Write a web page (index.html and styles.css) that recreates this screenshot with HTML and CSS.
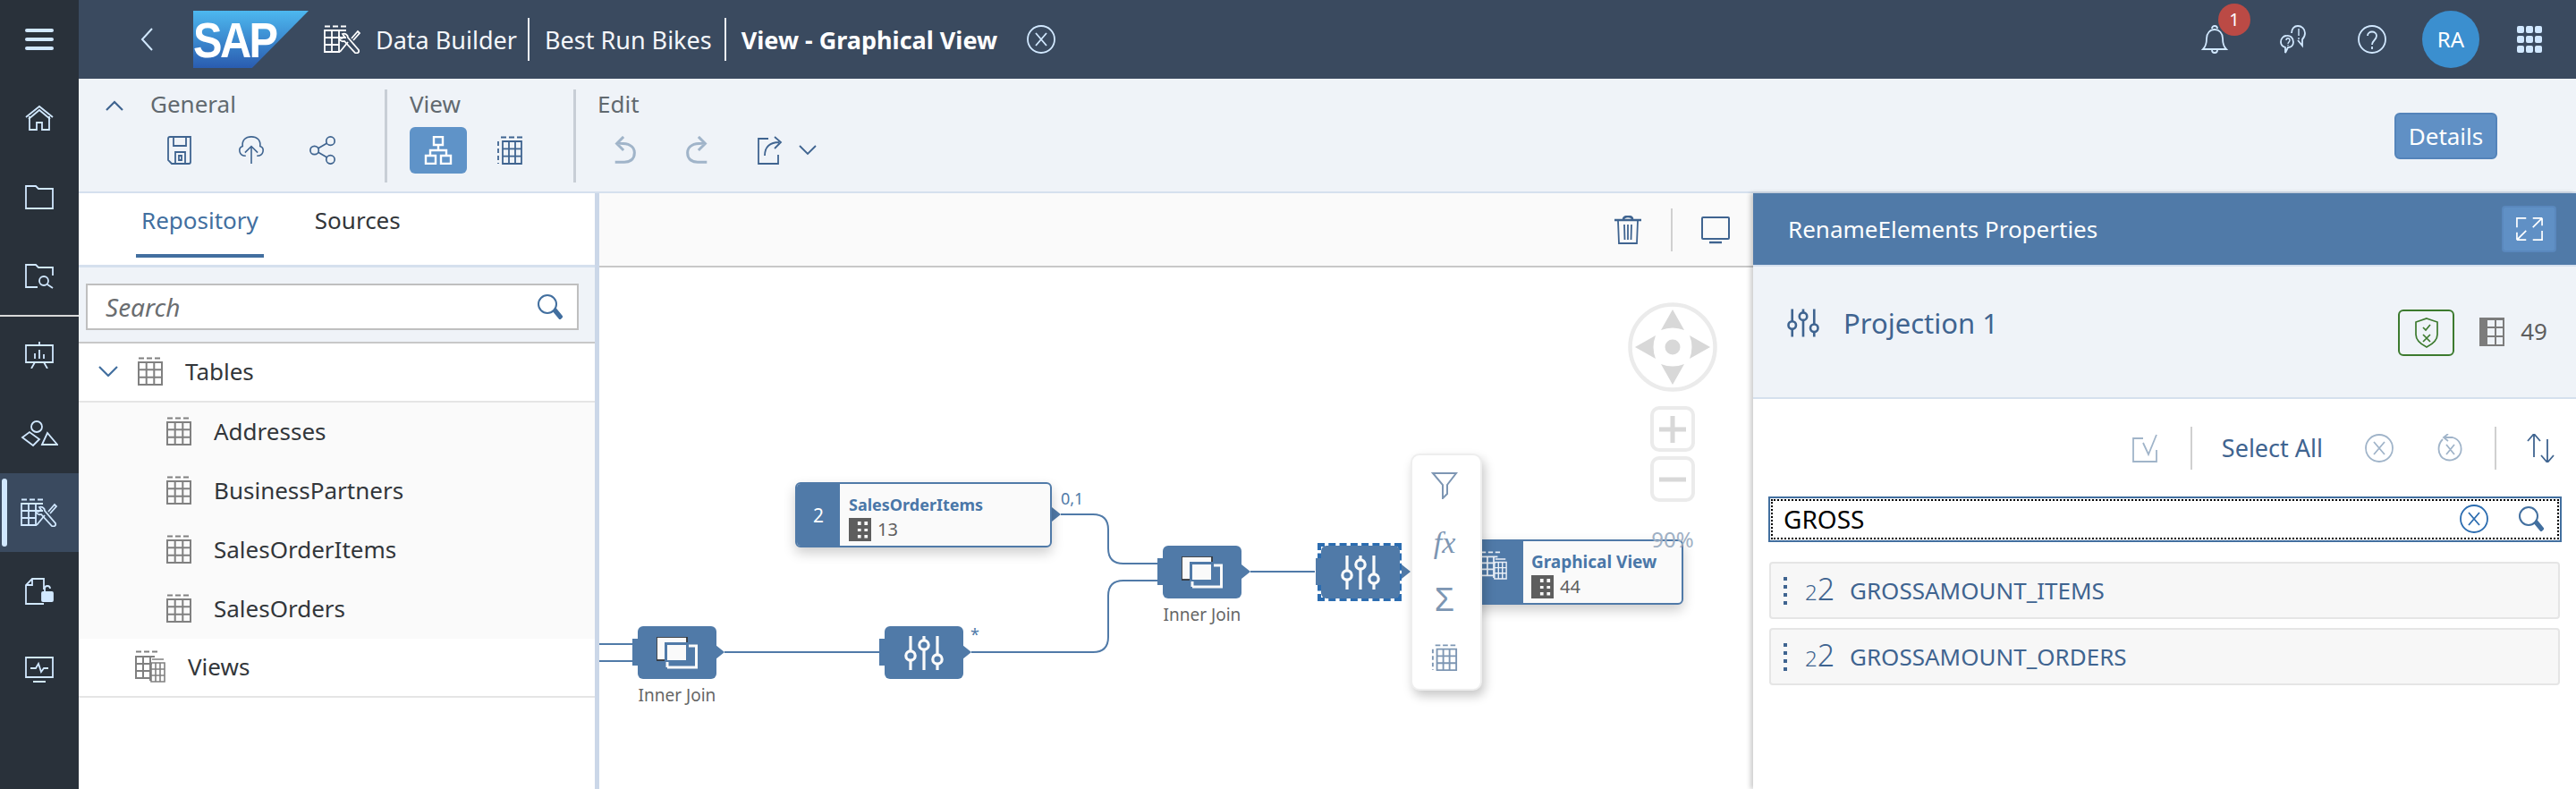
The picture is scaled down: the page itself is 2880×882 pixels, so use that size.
FILE: index.html
```html
<!DOCTYPE html>
<html lang="en">
<head>
  <meta charset="UTF-8">
  <title>Data Builder - Graphical View</title>
  <link rel="stylesheet" href="styles.css">
</head>
<body>
<svg class="defs" width="0" height="0">
  <symbol id="i-table" viewBox="0 0 28 32"><g fill="none" stroke="currentColor" stroke-width="2"><path d="M1 1.5h26" stroke-dasharray="6 3"/><path d="M1 6h26v25H1zM9.7 6v25M18.3 6v25M1 14.3h26M1 22.7h26"/></g></symbol>
  <symbol id="i-tables" viewBox="0 0 34 36"><g fill="none" stroke="currentColor" stroke-width="2"><path d="M1 1.5h24" stroke-dasharray="6 3"/><path d="M22 7H1v24h16M1 15h18M1 23h16M9 7v24M17 7v27"/><path d="M18 14h15v21H18zM23 14v21M28 14v21M18 21h15M18 28h15M19 10h13" stroke-width="1.6"/></g></symbol>
  <symbol id="i-tablefill" viewBox="0 0 25 26"><rect width="25" height="26" rx="2" fill="#5e5e5e"/><path d="M9 3h5.5v6H9zM16.500 3H22v6h-5.500zM9 11h5.500v5H9zM16.500 11H22v5h-5.500zM9 18h5.500v5.500H9zM16.500 18H22v5.500h-5.500z" fill="#fafafa"/></symbol>
  <symbol id="i-sliders" viewBox="0 0 44 38"><g fill="none" stroke="currentColor" stroke-width="3.200"><path d="M7 0v17M7 27v11M22 0v6M22 16v22M37 0v21M37 31v7"/><circle cx="7" cy="22" r="5.200"/><circle cx="22" cy="10" r="5.200"/><circle cx="37" cy="26" r="5.200"/></g></symbol>
  <symbol id="i-join" viewBox="0 0 46 36"><rect width="34" height="26" fill="#fafafa"/><path d="M12 34H44.500V10H35" fill="none" stroke="#fafafa" stroke-width="3"/><rect x="10.500" y="7.500" width="24" height="20" fill="#fafafa" stroke="#507aa8" stroke-width="3"/><path d="M12 28v6" stroke="#fafafa" stroke-width="3"/></symbol>
  <symbol id="i-xcircle" viewBox="0 0 32 32"><g fill="none" stroke="currentColor" stroke-width="1.800"><circle cx="16" cy="16" r="15"/><path d="M10 9l12 14M22 9L10 23"/></g></symbol>
  <symbol id="i-search" viewBox="0 0 28 28"><g fill="none" stroke="currentColor" stroke-width="2"><circle cx="11" cy="11" r="10"/></g><path d="M17.500 18.500l3-2 7 8.500-2.500 2.500z" fill="currentColor"/></symbol>
  <symbol id="i-builder" viewBox="0 0 42 32"><g fill="none" stroke="currentColor" stroke-width="1.800"><path d="M1 1.500h26" stroke-dasharray="6 3"/><path d="M25 6H1v24h17M1 14h24M1 22h16M9 6v24M17 6v24"/><path d="M21 10c3-1 6 1 6 4l12 14c1 3-2 4-4 3L23 18c-3 1-6-1-6-5l3 2 3-2z"/><path d="M18 30l9-11M31 15l7-8 2 2-7 8"/></g></symbol>
</svg>

<div class="app">
  <nav class="rail">
    <div class="rail-item">
      <div class="burger"><i></i><i></i><i></i></div>
    </div>
    <div class="rail-item"><svg class="rail-icon" viewBox="0 0 32 28"><path d="M1 13L16 1l15 12M5 12v15h8v-8h6v8h8V12" /><path d="M4 15L16 5l12 10"/></svg></div>
    <div class="rail-item"><svg class="rail-icon" viewBox="0 0 32 28"><path d="M1 2h11l3 3h16v22H1z"/></svg></div>
    <div class="rail-item"><svg class="rail-icon" viewBox="0 0 32 28"><path d="M14 27H1V2h11l3 3h16v9M31 5v5"/><circle cx="21" cy="20" r="5"/><path d="M25 24l6 4"/></svg></div>
    <div class="rail-line"></div>
    <div class="rail-item"><svg class="rail-icon" viewBox="0 0 32 30"><path d="M1 4h30v19H1zM16 0v4M11 23l-4 7M21 23l4 7M11 19v-6M16 19V9M21 19v-5"/></svg></div>
    <div class="rail-item"><svg class="rail-icon wide" viewBox="0 0 42 30"><circle cx="18" cy="7" r="6"/><path d="M2 19L10 13l11 8-7 7zM24 27l6-13 11 13z"/></svg></div>
    <div class="rail-item active"><svg class="rail-icon wide"><use href="#i-builder"/></svg></div>
    <div class="rail-item"><svg class="rail-icon" viewBox="0 0 32 30"><path d="M21 13V1H8L1 8v21h20M8 1v7H1" /><rect x="19" y="16" width="12" height="10" rx="1" fill="currentColor"/><path d="M22 16v-4c0-4 6-4 6 0"/></svg></div>
    <div class="rail-item"><svg class="rail-icon" viewBox="0 0 32 30"><path d="M1 1h30v22H1zM9 28h14M6 13h6l3-5 3 9 3-4h5"/></svg></div>
  </nav>

  <div class="main">
    <header class="shell">
      <svg class="back" viewBox="0 0 16 28"><path d="M14 2L3 14l11 12"/></svg>
      <div class="logo"><span>SAP</span></div>
      <svg class="shell-app"><use href="#i-builder"/></svg>
      <span class="crumb first">Data Builder</span>
      <span class="crumb">Best Run Bikes</span>
      <span class="crumb bold">View - Graphical View</span>
      <svg class="shell-close"><use href="#i-xcircle"/></svg>
      <div class="shell-right">
        <div class="bell">
          <svg class="shell-icon" viewBox="0 0 32 32"><path d="M3 27c3-3 4-6 4-12 0-6 4-10 9-10s9 4 9 10c0 6 1 9 4 12zM13 4c0-4 6-4 6 0M13 28c0 4 6 4 6 0"/></svg>
          <span class="badge">1</span>
        </div>
        <svg class="shell-icon" viewBox="0 0 32 32"><path d="M8 12c4-1 8 2 8 7 0 4-3 6-6 6l-3 6v-6c-3-1-5-3-5-6 0-4 3-7 6-7zM14 9c0-5 3-8 7-8s8 3 8 8c0 3-1 5-3 7v7l-5-6"/><path d="M22 4v8M22 14v2M8 17c0-3 4-3 4 0 0 2-2 2-2 4M10 22v1" stroke-width="1.400"/></svg>
        <svg class="shell-icon" viewBox="0 0 32 32"><circle cx="16" cy="16" r="15"/><path d="M11 12c0-6 10-6 10 0 0 5-5 5-5 10M16 24v3"/></svg>
        <div class="avatar">RA</div>
        <div class="dots"><i></i><i></i><i></i><i></i><i></i><i></i><i></i><i></i><i></i></div>
      </div>
    </header>

    <section class="ribbon">
      <svg class="ribbon-toggle" viewBox="0 0 22 12"><path d="M2 11l9-9 9 9"/></svg>
      <div class="group general">
        <span class="group-title">General</span>
        <div class="group-icons">
          <svg class="tool" viewBox="0 0 28 32"><path d="M1 3q0-2 2-2h23v28q0 2-2 2H5l-4-4zM7 1v10h14V1M9 18h11v13H9zM13 22h3v5h-3z"/></svg>
          <svg class="tool" viewBox="0 0 32 36"><path d="M16 35V13M8 21l8-8 8 8M9 25c-9 0-10-10-4-12C4 5 9 1 16 1s12 4 11 12c6 2 5 12-4 12"/></svg>
          <svg class="tool" viewBox="0 0 32 34"><circle cx="6" cy="17" r="5"/><circle cx="25" cy="6" r="5"/><circle cx="25" cy="28" r="5"/><path d="M10.500 14.500L21 8.500M10.500 19.500L21 25.500"/></svg>
        </div>
      </div>
      <div class="group view">
        <span class="group-title">View</span>
        <div class="group-icons">
          <div class="tool-on"><svg class="tool white" viewBox="0 0 32 32"><path d="M11 1h10v9H11zM2 22h11v9H2zM19 22h11v9H19zM16 10v6M7 22v-6h18v6"/></svg></div>
          <svg class="tool" viewBox="0 0 28 32"><path d="M4 1.500h24" stroke-dasharray="6 3"/><path d="M6 6h21v25H6zM13 6v25M20 6v25M6 14.300h21M6 22.600h21"/><path d="M1 6v25" stroke-dasharray="5 3"/></svg>
        </div>
      </div>
      <div class="group edit">
        <span class="group-title">Edit</span>
        <div class="group-icons">
          <svg class="tool dim thick" viewBox="0 0 28 34"><path d="M12 1L4 9l8 8M4 9c14-1 21 3 21 11 0 9-7 11-12 11H2"/></svg>
          <svg class="tool dim thick" viewBox="0 0 28 34"><path d="M16 1l8 8-8 8M24 9C10 8 3 12 3 20c0 9 7 11 12 11h11"/></svg>
          <svg class="tool share" viewBox="0 0 32 32"><path d="M12 3H1v28h22V21M8 22c0-10 6-15 16-15M19 1l7 6-7 7"/></svg>
          <svg class="caret" viewBox="0 0 20 12"><path d="M1 1l9 9 9-9"/></svg>
        </div>
      </div>
      <button class="details">Details</button>
    </section>

    <div class="work">
      <aside class="repo">
        <div class="tabs">
          <span class="tab on">Repository</span>
          <span class="tab">Sources</span>
        </div>
        <div class="repo-search">
          <div class="searchbox">
            <span>Search</span>
            <svg class="search-mark"><use href="#i-search"/></svg>
          </div>
        </div>
        <div class="tree-row top">
          <svg class="expander" viewBox="0 0 22 12"><path d="M1 1l10 10 10-10"/></svg>
          <svg class="tree-icon"><use href="#i-table"/></svg>
          <span>Tables</span>
        </div>
        <div class="tree-kids">
          <div class="tree-row"><svg class="tree-icon"><use href="#i-table"/></svg><span>Addresses</span></div>
          <div class="tree-row"><svg class="tree-icon"><use href="#i-table"/></svg><span>BusinessPartners</span></div>
          <div class="tree-row"><svg class="tree-icon"><use href="#i-table"/></svg><span>SalesOrderItems</span></div>
          <div class="tree-row"><svg class="tree-icon"><use href="#i-table"/></svg><span>SalesOrders</span></div>
        </div>
        <div class="tree-row top views">
          <svg class="tree-icon big"><use href="#i-tables"/></svg>
          <span>Views</span>
        </div>
      </aside>

      <section class="canvas">
        <div class="canvas-bar">
          <svg class="bar-icon" viewBox="0 0 30 32"><path d="M0 5h30M10 4c0-4 10-4 10 0" stroke-width="2.600"/><path d="M4 6l1 25h20l1-25M11 10l.5 17M15 10v17M19 10l-.5 17"/></svg>
          <i class="bar-sep"></i>
          <svg class="bar-icon" viewBox="0 0 32 30"><path d="M2 1h28q1 0 1 1v22q0 1-1 1H2q-1 0-1-1V2q0-1 1-1z" stroke-width="2"/><path d="M9 29h14" stroke-width="2.400"/></svg>
        </div>
        <div class="stage">
          <svg class="wires" viewBox="0 0 1285 583">
            <path d="M0 421H37M0 440H37M140 430H314M416 430H552q17 0 17-17V367q0-17 17-17H625M516 276H552q17 0 17 17V314q0 17 17 17H625M728 340H800"/>
            <path class="tip" d="M130 422l10 8-10 8zM406 422l10 8-10 8zM506 268l10 8-10 8zM718 332l10 8-10 8zM897 332l10 8-10 8z"/>
          </svg>

          <div class="node card sales">
            <div class="card-side">2</div>
            <div class="card-body">
              <b>SalesOrderItems</b>
              <div class="card-count"><svg class="count-icon"><use href="#i-tablefill"/></svg>13</div>
            </div>
          </div>
          <span class="node cardinal one">0,1</span>
          <span class="node cardinal many">*</span>

          <div class="node box join-a"><svg class="box-join"><use href="#i-join"/></svg><i class="port"></i></div>
          <span class="node box-label label-a">Inner Join</span>
          <div class="node box proj-a"><svg class="box-sliders"><use href="#i-sliders"/></svg><i class="port"></i></div>
          <div class="node box join-b"><svg class="box-join"><use href="#i-join"/></svg><i class="port"></i></div>
          <span class="node box-label label-b">Inner Join</span>
          <div class="node selected"></div>
          <div class="node box proj-b"><svg class="box-sliders"><use href="#i-sliders"/></svg><i class="port"></i></div>

          <div class="node card graph">
            <div class="card-side"><svg class="side-icon"><use href="#i-tables"/></svg></div>
            <div class="card-body">
              <b>Graphical View</b>
              <div class="card-count"><svg class="count-icon"><use href="#i-tablefill"/></svg>44</div>
            </div>
          </div>

          <div class="node popup">
            <svg class="pop-icon" viewBox="0 0 28 30"><path d="M1 1h26L17 14v10l-5 5V14z"/></svg>
            <span class="pop-fx">fx</span>
            <span class="pop-sum">Σ</span>
            <svg class="pop-icon" viewBox="0 0 30 32"><path d="M4 1.500h26" stroke-dasharray="6 3"/><path d="M6 6h23v25H6zM13.500 6v25M21 6v25M6 14.300h23M6 22.600h23"/><path d="M1 6v25" stroke-dasharray="5 3"/></svg>
          </div>

          <div class="node nav">
            <svg class="nav-pad" viewBox="0 0 100 100">
              <circle cx="50" cy="50" r="47.500" fill="#fff" stroke="#ebebeb" stroke-width="4.500"/>
              <path d="M50 8L63 31Q50 26 37 31zM50 92L63 69Q50 74 37 69zM8 50L31 37Q26 50 31 63zM92 50L69 37Q74 50 69 63z" fill="#d8d8d8"/>
              <circle cx="50" cy="50" r="8.500" fill="#d8d8d8"/>
            </svg>
            <div class="nav-btn"><svg viewBox="0 0 30 30"><path d="M0 15h30M15 0v30"/></svg></div>
            <div class="nav-btn"><svg viewBox="0 0 30 30"><path d="M0 15h30"/></svg></div>
          </div>
          <span class="node zoom">90%</span>
        </div>
      </section>

      <aside class="props">
        <div class="props-head">
          <span>RenameElements Properties</span>
          <div class="expand"><svg viewBox="0 0 32 32"><path d="M1 14V3h11M20 3h11M31 3L20 14M31 3v9M1 29h11M1 29l11-11M1 29v-9M20 29h11V18" /></svg></div>
        </div>
        <div class="props-info">
          <svg class="info-icon"><use href="#i-sliders"/></svg>
          <span class="info-name">Projection 1</span>
          <div class="shield">
            <svg viewBox="0 0 26 34"><path d="M13 1l12 4v14c0 7-6 11-12 14C7 30 1 26 1 19V5z"/><path d="M9 11l3 3 5-6M9 19l8 8M17 19l-8 8"/></svg>
          </div>
          <svg class="info-table" viewBox="0 0 28 32"><rect width="28" height="32" fill="#7c7c7c"/><path d="M9 3h8v7H9zM19 3h7v7h-7zM9 12h8v8H9zM19 12h7v8h-7zM9 22h8v8H9zM19 22h7v8h-7z" fill="#eff3f8"/></svg>
          <span class="info-count">49</span>
        </div>
        <div class="props-tools">
          <svg class="ptool faded" viewBox="0 0 30 32"><path d="M12 5H1v26h26V18M12 10l6 13 9-22"/></svg>
          <i class="bar-sep"></i>
          <span class="select-all">Select All</span>
          <svg class="ptool faded"><use href="#i-xcircle"/></svg>
          <svg class="ptool faded" viewBox="0 0 32 32"><path d="M8 6C2 12 2 22 8 27c7 5 17 2 20-6 2-7-1-15-9-17H10M14 0l-5 4 5 4M12 12l9 11M21 12l-9 11"/></svg>
          <i class="bar-sep"></i>
          <svg class="ptool" viewBox="0 0 32 32"><path d="M9 0v26M2 8l7-8 7 8M24 6v26M17 24l7 8 7-8"/></svg>
        </div>
        <div class="filter">
          <div class="filter-in">
            <span>GROSS</span>
            <svg class="filter-x"><use href="#i-xcircle"/></svg>
            <svg class="filter-go"><use href="#i-search"/></svg>
          </div>
        </div>
        <div class="column"><span class="grip"><i></i><i></i><i></i><i></i></span><span class="num"><small>2</small>2</span><span>GROSSAMOUNT_ITEMS</span></div>
        <div class="column"><span class="grip"><i></i><i></i><i></i><i></i></span><span class="num"><small>2</small>2</span><span>GROSSAMOUNT_ORDERS</span></div>
      </aside>
    </div>
  </div>
</div>
</body>
</html>
```
FILE: styles.css
```css
* {
  box-sizing: border-box;
}
html, body {
  margin: 0;
  height: 100%;
  overflow: hidden;
}
body {
  font-family: "Noto Sans", Arial, sans-serif;
  background: #fff;
  color: #32363a;
}
svg {
  display: block;
  fill: none;
  stroke: currentColor;
  stroke-width: 1.8;
}
.defs {
  position: absolute;
}
.app {
  display: flex;
  height: 882px;
}

/* left rail */
.rail {
  width: 88px;
  flex: none;
  background: #29313a;
  color: #d1e8ff;
}
.rail-item {
  height: 88px;
  display: flex;
  align-items: center;
  justify-content: center;
  position: relative;
}
.rail-icon {
  width: 32px;
  height: 30px;
}
.rail-icon.wide {
  width: 42px;
  height: 32px;
}
.rail-line {
  height: 2px;
  margin-bottom: -1px;
  background: #d9d9d9;
}
.rail-item.active {
  background: #3a4a5f;
}
.rail-item.active::before {
  content: "";
  position: absolute;
  left: 2px;
  top: 6px;
  bottom: 6px;
  width: 6px;
  border-radius: 3px;
  background: #d1e8ff;
}
.burger {
  width: 32px;
  display: flex;
  flex-direction: column;
  gap: 6px;
}
.burger i {
  height: 4px;
  border-radius: 2px;
  background: #d1e8ff;
}

/* shell bar */
.main {
  flex: 1;
  min-width: 0;
  display: flex;
  flex-direction: column;
}
.shell {
  height: 88px;
  flex: none;
  background: #3a4a5f;
  display: flex;
  align-items: center;
  color: #fff;
  font-size: 27px;
}
.back {
  width: 16px;
  height: 30px;
  margin-left: 68px;
  color: #d1e8ff;
  stroke-width: 2;
}
.logo {
  width: 129px;
  height: 64px;
  margin-left: 44px;
  background: linear-gradient(#4db8ef, #2a5cb0);
  clip-path: polygon(0 0, 100% 0, 51% 100%, 0 100%);
  font-family: "Liberation Sans", Arial, sans-serif;
  font-weight: bold;
  font-size: 56px;
  line-height: 66px;
  letter-spacing: -3px;
  white-space: nowrap;
}
.logo span {
  display: inline-block;
  transform: scaleX(0.87);
  transform-origin: left;
}
.shell-app {
  width: 42px;
  height: 32px;
  margin-left: 17px;
  color: #fff;
}
.crumb {
  display: flex;
  align-items: center;
  height: 48px;
  padding: 0 14px 0 17px;
  border-right: 2px solid #eef2f7;
  white-space: nowrap;
  color: #f4f7fb;
}
.crumb.first {
  padding: 0 12px 0 16px;
}
.crumb.bold {
  font-weight: 700;
  border-right: 0;
  color: #fff;
}
.shell-close {
  width: 32px;
  height: 32px;
  margin-left: 19px;
  color: #d1e8ff;
}
.shell-right {
  margin-left: auto;
  display: flex;
  align-items: center;
  gap: 56px;
  padding-right: 38px;
  color: #d1e8ff;
}
.shell-icon {
  width: 32px;
  height: 32px;
}
.bell {
  position: relative;
}
.badge {
  position: absolute;
  left: 20px;
  top: -24px;
  width: 36px;
  height: 36px;
  border-radius: 50%;
  background: #bb4a45;
  color: #fff;
  font-size: 20px;
  line-height: 36px;
  text-align: center;
}
.avatar {
  width: 64px;
  height: 64px;
  margin: 0 -16px;
  border-radius: 50%;
  background: #3b8fcf;
  color: #fff;
  font-size: 24px;
  line-height: 64px;
  text-align: center;
}
.dots {
  width: 28px;
  display: grid;
  grid-template-columns: repeat(3, 8px);
  gap: 3px 2px;
  margin-left: 2px;
}
.dots i {
  height: 8px;
  border-radius: 2px;
  background: #d1e8ff;
}

/* ribbon */
.ribbon {
  height: 128px;
  flex: none;
  background: #eff3f8;
  border-bottom: 2px solid #d5e0ee;
  display: flex;
  position: relative;
  color: #3f6490;
}
.ribbon-toggle {
  width: 22px;
  height: 12px;
  margin: 24px 0 0 29px;
  stroke-width: 2.2;
}
.group {
  height: 104px;
  margin-top: 12px;
  display: flex;
  flex-direction: column;
  border-right: 3px solid #c8ced6;
}
.general {
  width: 294px;
  padding-left: 29px;
}
.view {
  width: 211px;
  padding-left: 25px;
}
.edit {
  border-right: 0;
  padding-left: 24px;
}
.group-title {
  font-size: 26px;
  line-height: 32px;
  color: #61696f;
}
.group-icons {
  display: flex;
  align-items: center;
  height: 52px;
  margin-top: 10px;
}
.general .group-icons {
  padding-left: 17px;
  gap: 48px;
}
.view .group-icons {
  gap: 32px;
}
.edit .group-icons {
  padding-left: 15px;
  gap: 48px;
}
.tool {
  width: 32px;
  height: 32px;
  flex: none;
}
.tool.share {
  margin-left: 4px;
}
.tool.white {
  color: #fff;
  stroke-width: 2.4;
}
.tool.dim {
  color: #a0b4c9;
}
.tool.thick {
  stroke-width: 3.2;
}
.tool-on {
  width: 64px;
  height: 52px;
  border-radius: 6px;
  background: #5f93c8;
  display: flex;
  align-items: center;
  justify-content: center;
}
.caret {
  width: 20px;
  height: 12px;
  margin-left: -34px;
}
.details {
  position: absolute;
  left: 2589px;
  top: 38px;
  width: 115px;
  height: 52px;
  border: 2px solid #5484ba;
  border-radius: 6px;
  background: #6090c5;
  color: #fff;
  font: 26px "Noto Sans", Arial, sans-serif;
  padding: 0;
}

/* work area */
.work {
  flex: 1;
  min-height: 0;
  display: flex;
}

/* repository */
.repo {
  width: 582px;
  flex: none;
  border-right: 5px solid #cbd7e8;
  background: #fff;
  font-size: 26px;
}
.tabs {
  height: 83px;
  display: flex;
  gap: 63px;
  padding-left: 70px;
  border-bottom: 3px solid #d5e0ee;
}
.tab {
  height: 72px;
  line-height: 60px;
  color: #32363a;
}
.tab.on {
  color: #426f9f;
  border-bottom: 4px solid #426f9f;
  margin: 0 -6px;
  padding: 0 6px;
}
.repo-search {
  height: 85px;
  padding: 18px 18px 0 8px;
  background: #eff3f8;
  border-bottom: 2px solid #c8c8c8;
}
.searchbox {
  height: 52px;
  border: 2px solid #bfbfbf;
  background: #fff;
  display: flex;
  align-items: center;
  justify-content: space-between;
  padding: 0 16px 0 20px;
  font-size: 28px;
  font-style: italic;
  color: #6a6d70;
}
.search-mark {
  width: 28px;
  height: 28px;
  color: #426f9f;
}
.tree-row {
  height: 66px;
  display: flex;
  align-items: center;
  gap: 24px;
  padding: 0 0 2px 98px;
}
.tree-row.top {
  padding-left: 22px;
  gap: 24px;
  height: 66px;
  border-bottom: 2px solid #e5e5e5;
}
.tree-row.views {
  padding-left: 63px;
}
.expander {
  width: 22px;
  height: 12px;
  color: #426f9f;
  stroke-width: 2.2;
  margin-right: -2px;
}
.tree-icon {
  width: 28px;
  height: 32px;
  color: #808080;
  flex: none;
  margin-right: 1px;
}
.tree-icon.big {
  width: 34px;
  height: 36px;
}
.tree-kids {
  background: #fafafa;
}

/* canvas */
.canvas {
  flex: 1;
  min-width: 0;
  display: flex;
  flex-direction: column;
  background: #fff;
}
.canvas-bar {
  height: 83px;
  flex: none;
  background: #fafafa;
  border-bottom: 2px solid #c8c8c8;
  display: flex;
  align-items: center;
  justify-content: flex-end;
  gap: 32px;
  padding-right: 26px;
  color: #3f6490;
}
.bar-icon {
  width: 32px;
  height: 32px;
  stroke-width: 1.8;
}
.bar-sep {
  width: 2px;
  height: 48px;
  background: #d0d0d0;
  flex: none;
}
.stage {
  flex: 1;
  position: relative;
  overflow: hidden;
}
.wires {
  position: absolute;
  left: 0;
  top: 0;
  width: 1285px;
  height: 583px;
  color: #507aa8;
  stroke-width: 2;
}
.wires .tip {
  fill: #507aa8;
  stroke: none;
}
.node {
  position: absolute;
}
.card {
  display: flex;
  height: 73px;
  border: 2px solid #507aa8;
  border-radius: 6px;
  background: #fafafa;
  box-shadow: 0 6px 14px rgba(0, 0, 0, 0.2);
  overflow: hidden;
}
.card-side {
  width: 48px;
  flex: none;
  background: #507aa8;
  color: #fff;
  font-size: 21px;
  display: flex;
  align-items: center;
  justify-content: center;
}
.card-body {
  padding: 10px 0 0 10px;
  color: #4a77a8;
  font-size: 20px;
  line-height: 26px;
  white-space: nowrap;
}
.card-body b {
  font-size: 19px;
}
.sales .card-body b {
  font-size: 18px;
}
.card-count {
  display: flex;
  align-items: center;
  gap: 7px;
  margin-top: 2px;
  color: #5e5e5e;
}
.count-icon {
  width: 25px;
  height: 26px;
}
.sales {
  left: 219px;
  top: 240px;
  width: 287px;
}
.graph {
  left: 960px;
  top: 304px;
  width: 252px;
}
.graph .card-side {
  width: 71px;
  padding-left: 23px;
  justify-content: flex-start;
  align-items: flex-start;
  padding-top: 11px;
}
.graph .card-body {
  padding-left: 9px;
}
.side-icon {
  width: 30px;
  height: 32px;
  color: #eaf0f7;
}
.cardinal {
  font-size: 18px;
  color: #507aa8;
  line-height: 20px;
}
.one {
  left: 516px;
  top: 248px;
}
.many {
  left: 415px;
  top: 400px;
}
.box {
  width: 88px;
  height: 59px;
  border-radius: 6px;
  background: #507aa8;
  display: flex;
  align-items: center;
  justify-content: center;
}
.port {
  position: absolute;
  left: -6px;
  top: 14px;
  width: 6px;
  height: 30px;
  background: #507aa8;
}
.box-join {
  width: 46px;
  height: 36px;
}
.box-sliders {
  width: 44px;
  height: 38px;
  color: #fafafa;
}
.box-label {
  font-size: 19px;
  line-height: 24px;
  color: #666;
  width: 88px;
  text-align: center;
  white-space: nowrap;
}
.join-a {
  left: 43px;
  top: 401px;
}
.label-a {
  left: 43px;
  top: 466px;
}
.proj-a {
  left: 319px;
  top: 401px;
}
.join-b {
  left: 630px;
  top: 311px;
}
.label-b {
  left: 630px;
  top: 376px;
}
.proj-b {
  left: 807px;
  top: 311px;
}
.selected {
  left: 803px;
  top: 308px;
  width: 94px;
  height: 65px;
  border: 4px dashed #2b6cb0;
}
.popup {
  left: 907px;
  top: 208px;
  width: 80px;
  height: 265px;
  background: #fff;
  border: 2px solid #eeeeee;
  border-radius: 10px;
  box-shadow: 3px 6px 12px rgba(0, 0, 0, 0.22);
  display: grid;
  grid-auto-rows: 64px;
  place-items: center;
  padding: 2px 4px 0 0;
  color: #7d96b3;
}
.pop-icon {
  width: 30px;
  height: 30px;
  stroke-width: 2;
}
.pop-fx {
  font: italic 34px/34px "Liberation Serif", serif;
}
.pop-sum {
  font: 36px/36px "Liberation Sans", sans-serif;
}
.nav {
  left: 1150px;
  top: 37px;
  width: 100px;
  display: flex;
  flex-direction: column;
  align-items: center;
  gap: 5px;
}
.nav-pad {
  width: 100px;
  height: 104px;
  margin-bottom: 9px;
  stroke: none;
}
.nav-btn {
  width: 50px;
  height: 51px;
  border: 4px solid #ebebeb;
  border-radius: 10px;
  background: #fff;
  display: flex;
  align-items: center;
  justify-content: center;
  color: #d8d8d8;
}
.nav-btn svg {
  width: 30px;
  height: 30px;
  stroke-width: 5;
}
.zoom {
  left: 1150px;
  top: 288px;
  width: 100px;
  text-align: center;
  font-size: 24px;
  line-height: 32px;
  color: #9fb0c4;
}

/* properties */
.props {
  width: 920px;
  flex: none;
  background: #fff;
  box-shadow: -3px 0 5px rgba(0, 0, 0, 0.2);
  position: relative;
  color: #3f6490;
}
.props-head {
  height: 82px;
  background: #507aa8;
  border-bottom: 2px solid #d5e0ee;
  display: flex;
  align-items: center;
  justify-content: space-between;
  padding: 0 22px 0 39px;
  color: #fff;
  font-size: 26px;
}
.expand {
  width: 61px;
  height: 52px;
  border-radius: 4px;
  border: 2px solid #5a88bd;
  background: #6090c5;
  display: flex;
  align-items: center;
  justify-content: center;
}
.expand svg {
  width: 30px;
  height: 30px;
}
.props-info {
  height: 148px;
  background: #eff3f8;
  border-bottom: 2px solid #d5e0ee;
  display: flex;
  padding-left: 38px;
  align-items: flex-start;
}
.info-icon {
  width: 36px;
  height: 32px;
  margin-top: 47px;
  stroke-width: 1.8;
}
.info-name {
  margin: 40px 0 0 27px;
  font-size: 31px;
  line-height: 46px;
  color: #3f6490;
}
.shield {
  margin: 48px 0 0 auto;
  width: 63px;
  height: 52px;
  border: 2px solid #3c7a2e;
  border-radius: 6px;
  display: flex;
  align-items: center;
  justify-content: center;
  color: #3c7a2e;
}
.shield svg {
  width: 26px;
  height: 34px;
  stroke-width: 1.7;
}
.info-table {
  width: 28px;
  height: 32px;
  margin: 57px 0 0 28px;
  stroke: none;
}
.info-count {
  margin: 54px 32px 0 18px;
  font-size: 26px;
  line-height: 36px;
  color: #5e5e5e;
}
.props-tools {
  height: 109px;
  display: flex;
  align-items: center;
  justify-content: flex-end;
  padding: 0 24px 0 0;
  gap: 0;
}
.ptool {
  width: 32px;
  height: 32px;
  flex: none;
}
.ptool.faded {
  color: #a0b4c9;
}
.props-tools .bar-sep {
  margin: 0 33px 0 34px;
}
.props-tools .ptool.faded + .ptool.faded {
  margin-left: 47px;
}
.select-all {
  font-size: 27px;
  margin-right: 47px;
  white-space: nowrap;
}
.filter {
  padding: 0 16px 0 17px;
  margin-bottom: 22px;
}
.filter-in {
  height: 51px;
  border: 2px solid #426f9f;
  outline: 2px dotted #000;
  outline-offset: -5px;
  display: flex;
  align-items: center;
  padding: 0 18px 2px 15px;
  color: #000;
  font-size: 28px;
}
.filter-in span {
  margin-right: auto;
}
.filter-x {
  width: 32px;
  height: 32px;
  color: #2b6cb0;
}
.filter-go {
  width: 28px;
  height: 28px;
  margin-left: 34px;
  color: #426f9f;
}
.column {
  height: 64px;
  margin: 0 18px 10px 18px;
  background: #f7f7f7;
  border: 2px solid #e5e5e5;
  border-radius: 4px;
  display: flex;
  align-items: center;
  padding-left: 14px;
  font-size: 26px;
  color: #3f6490;
  white-space: nowrap;
}
.grip {
  width: 4px;
  display: flex;
  flex-direction: column;
  gap: 5px;
  margin-right: 20px;
}
.grip i {
  height: 4px;
  background: #3f6490;
}
.num {
  font-size: 34px;
  font-weight: 300;
  width: 50px;
  line-height: 40px;
}
.num small {
  font-size: 24px;
}
```
